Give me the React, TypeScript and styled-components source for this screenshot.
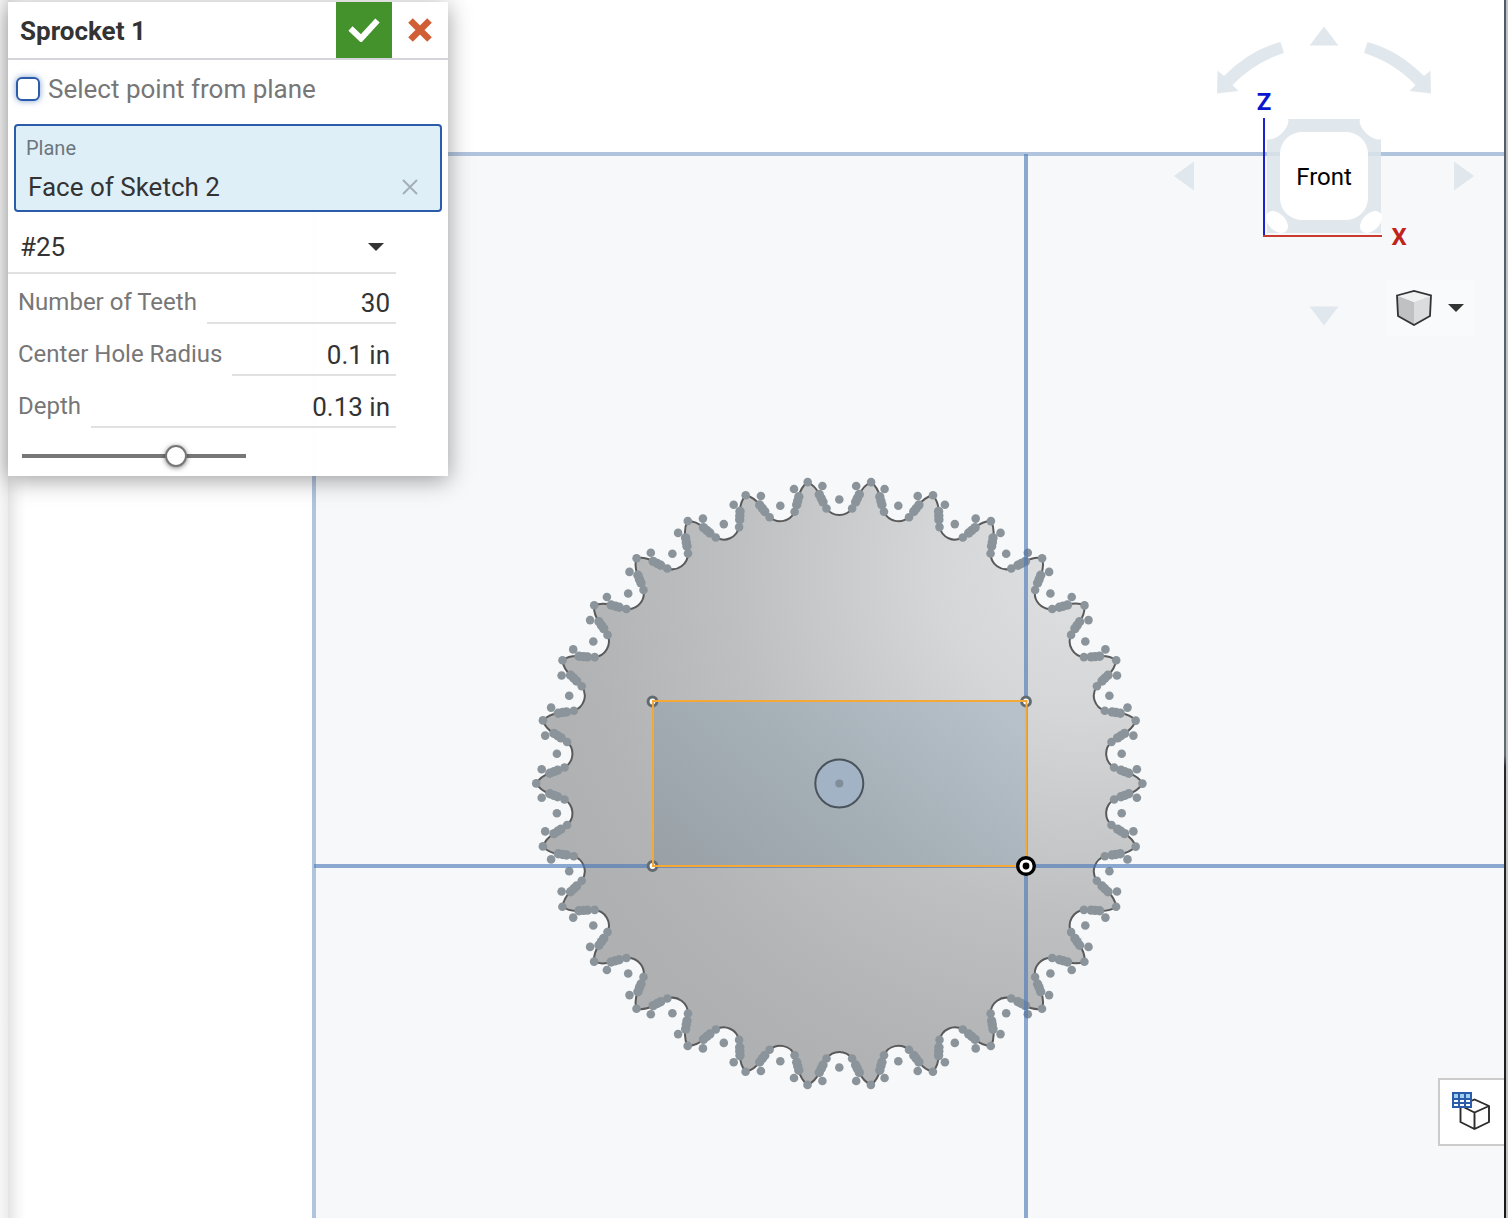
import React, { useState } from "react";
import styled, { createGlobalStyle } from "styled-components";

const GlobalStyle = createGlobalStyle`
  *, *::before, *::after { box-sizing: border-box; }
  body { margin: 0; background: #fff; font-family: Roboto, "Liberation Sans", sans-serif; color: #333; }
  button, input, select { font: inherit; color: inherit; margin: 0; padding: 0; border: 0; background: none; border-radius: 0; }
`;

const Workspace = styled.main`
  position: relative;
  display: flex;
  min-height: 100vh;
  overflow: hidden;
  background: #fff;
`;

const LeftGutter = styled.div`
  flex: 0 0 8px;
  background: linear-gradient(90deg, #f6f6f6, #ececec);
`;

const Stage = styled.div`
  flex: 1;
  background: linear-gradient(90deg, #e4e4e4, #f7f7f7 10px, #fff 18px);
`;

const RightGutter = styled.div`
  flex: 0 0 4px;
  background:
    linear-gradient(#4f5b69, #5f6a70 62%, #26282b 63%, #191919) left / 2px 100% no-repeat,
    #c4c4c4;
`;

const Scene = styled.svg`
  position: absolute;
  inset: 0;
  width: calc(100% - 4px);
  height: 100%;
`;

const Dialog = styled.form`
  position: absolute;
  top: 2px;
  left: 8px;
  width: 440px;
  padding-bottom: 8px;
  background: rgba(255, 255, 255, 0.98);
  box-shadow: 0 4px 22px rgba(0, 0, 0, 0.38);
`;

const DialogHeader = styled.header`
  display: flex;
  height: 58px;
  border-bottom: 2px solid #d3d5da;
`;

const DialogTitle = styled.h1`
  flex: 1;
  margin: 0;
  padding-left: 12px;
  font-size: 26px;
  font-weight: 700;
  line-height: 58px;
`;

const HeaderButton = styled.button<{ $accept?: boolean }>`
  display: grid;
  place-items: center;
  width: 56px;
  height: 56px;
  color: ${(p) => (p.$accept ? "#fff" : "#d15f36")};
  background: ${(p) => (p.$accept ? "#43922b" : "transparent")};
`;

const CheckRow = styled.label`
  display: flex;
  align-items: center;
  gap: 8px;
  height: 58px;
  padding-left: 8px;
  font-size: 26px;
  color: #777;
`;

const Tick = styled.input`
  appearance: none;
  width: 24px;
  height: 24px;
  border: 2px solid #2a5caa;
  border-radius: 6px;
  background: #fff;
  box-shadow: 0 0 6px rgba(42, 92, 170, 0.6);
  &:checked { background: #2a5caa; }
`;

const Selection = styled.section`
  display: flex;
  flex-direction: column;
  gap: 8px;
  height: 88px;
  margin: 6px 6px 0;
  padding: 10px 20px 0 10px;
  border: 2px solid #2a5caa;
  border-radius: 4px;
  background: #dfeff8;
`;

const SelectionLabel = styled.h2`
  margin: 0;
  font-size: 20px;
  font-weight: 400;
  line-height: 24px;
  color: #6c767c;
`;

const SelectionItem = styled.div`
  display: flex;
  justify-content: space-between;
  align-items: center;
  padding-left: 2px;
  font-size: 26px;
  line-height: 38px;
`;

const ClearButton = styled.button`
  display: grid;
  place-items: center;
  width: 20px;
  height: 20px;
  color: #a3b0b7;
`;

const Fields = styled.div`
  width: 388px;
`;

const SelectWrap = styled.div`
  display: grid;
  align-items: center;
  height: 62px;
  padding-top: 10px;
  border-bottom: 2px solid #e1e1e1;
  > * { grid-area: 1 / 1; }
  > svg { justify-self: end; margin-right: 12px; pointer-events: none; }
`;

const ChainSelect = styled.select`
  appearance: none;
  width: 100%;
  height: 48px;
  padding-left: 12px;
  font-size: 26px;
`;

const FieldRow = styled.div`
  display: flex;
  align-items: flex-start;
  gap: 10px;
  height: 52px;
  padding-left: 10px;
`;

const FieldLabel = styled.label`
  font-size: 24px;
  line-height: 56px;
  color: #777;
  white-space: nowrap;
`;

const FieldInput = styled.input`
  flex: 1;
  min-width: 0;
  height: 50px;
  padding: 10px 6px 0 0;
  border-bottom: 2px solid #e1e1e1;
  text-align: right;
  font-size: 26px;
  outline: none;
`;

const DepthSlider = styled.input`
  display: block;
  appearance: none;
  width: 224px;
  height: 24px;
  margin: 14px 14px 0;
  background: linear-gradient(#777, #777) center / 100% 4px no-repeat;
  &::-webkit-slider-thumb {
    appearance: none;
    width: 22px;
    height: 22px;
    border: 2px solid #777;
    border-radius: 50%;
    background: #fff;
    box-shadow: 0 1px 5px rgba(0, 0, 0, 0.5);
  }
`;

const ViewControls = styled.nav`
  position: absolute;
  top: 20px;
  right: 28px;
  width: 310px;
`;

const RenderButton = styled.button`
  display: flex;
  align-items: center;
  justify-content: space-between;
  width: 88px;
  height: 56px;
  padding: 0 10px;
  margin: -60px 6px 0 auto;
  border-radius: 4px;
  background: #f9fafb;
`;

const CubeArt = styled.svg`
  display: block;
  font-size: 24px;
`;

const TablesButton = styled.button`
  position: absolute;
  right: 4px;
  bottom: 72px;
  display: grid;
  place-items: center;
  width: 66px;
  height: 68px;
  border: 2px solid #ccc;
  border-right: 0;
  background: #fff;
`;

const CX = 839.3;
const CY = 783.5;
const TEETH = 30;

type Point = [number, number];

/* Points of one tooth gap, relative to the hub, with the gap straight up. */
const VERTICES: Point[] = [
  [0, -284],
  [-31.6, -301.4],
  [-12.8, -275], [12.8, -275],
  [-16.3, -281.5], [16.3, -281.5],
  [-18, -285], [18, -285],
  [-20, -289], [20, -289],
  [-16.9, -297.5], [16.9, -297.5],
];

const rotate = ([x, y]: Point, step: number): string => {
  const a = (step * 2 * Math.PI) / TEETH;
  const px = CX + x * Math.cos(a) - y * Math.sin(a);
  const py = CY + x * Math.sin(a) + y * Math.cos(a);
  return `${px.toFixed(1)} ${py.toFixed(1)}`;
};

const steps = Array.from({ length: TEETH }, (_, i) => i);

const outline =
  `M${rotate([-31.6, -301.4], 0)}` +
  steps
    .map((s) =>
      [
        `Q${rotate([-24.2, -298], s)} ${rotate([-19.7, -288.7], s)}`,
        `L${rotate([-16.3, -281.5], s)}`,
        `L${rotate([-12.7, -275], s)}`,
        `A15.6 15.6 0 0 0 ${rotate([12.7, -275], s)}`,
        `L${rotate([16.3, -281.5], s)}`,
        `L${rotate([19.7, -288.7], s)}`,
        `Q${rotate([24.2, -298], s)} ${rotate([31.6, -301.4], s)}`,
      ].join("")
    )
    .join("") +
  "Z";

function Sprocket() {
  return (
    <>
      <path d={outline} fill="url(#steel)" stroke="#5a5a5a" strokeWidth="2" />
      {steps.map((s) =>
        VERTICES.map((v, i) => {
          const [x, y] = rotate(v, s).split(" ");
          const onBlend = i >= 4 && i <= 9;
          return <circle key={`${s}-${i}`} cx={x} cy={y} r={onBlend ? 4.7 : 4.3} fill="#8b949a" />;
        })
      )}
    </>
  );
}

function ModelScene() {
  return (
    <Scene viewBox="0 0 1504 1218" preserveAspectRatio="xMidYMid slice" role="img" aria-label="Sprocket model, front view">
      <defs>
        <radialGradient id="steel" gradientUnits="userSpaceOnUse" cx="1080" cy="570" r="580">
          <stop offset="0" stopColor="#dfe0e1" />
          <stop offset="0.25" stopColor="#d5d6d7" />
          <stop offset="0.6" stopColor="#bebfc0" />
          <stop offset="0.85" stopColor="#b3b4b5" />
          <stop offset="1" stopColor="#afb0b1" />
        </radialGradient>
        <linearGradient id="sketch" gradientUnits="userSpaceOnUse" x1="680" y1="880" x2="900" y2="620">
          <stop offset="0" stopColor="#99a1a7" />
          <stop offset="0.5" stopColor="#a5afb6" />
          <stop offset="1" stopColor="#b6c1c9" />
        </linearGradient>
      </defs>
      <rect x="314" y="154" width="1400" height="1200" fill="#f6f8fa" stroke="#b1c4de" strokeWidth="4" />
      <Sprocket />
      <path d="M1026 154V1400M314 866H1600" stroke="#4878b8" strokeOpacity="0.62" strokeWidth="4" fill="none" />
      <rect x="653" y="702" width="373" height="164" fill="url(#sketch)" />
      <circle cx="839.300" cy="783.500" r="24" fill="#a1b3c4" stroke="#4a535b" strokeWidth="2" />
      <circle cx="839.300" cy="783.500" r="4" fill="#808d9a" />
      {[[652.5, 701.5], [1026, 701.5], [652.5, 866]].map(([x, y]) => (
        <circle key={`${x}-${y}`} cx={x} cy={y} r="4.4" fill="#fff" stroke="#626b71" strokeWidth="3" />
      ))}
      <rect x="653" y="701" width="373.500" height="165" fill="none" stroke="#f4a836" strokeWidth="2" />
      <circle cx="1026" cy="866" r="8.3" fill="#fff" stroke="#000" strokeWidth="3.4" />
      <circle cx="1026" cy="866" r="3.4" fill="#000" />
    </Scene>
  );
}

function ViewCube() {
  return (
    <CubeArt width="310" height="320" viewBox="1170 20 310 320" role="img" aria-label="View cube">
      <g fill="#dce4ea" fillOpacity="0.85">
        <path d="M1324 26.500l14.500 19h-29z" />
        <path d="M1324 325.500l14.500-19h-29z" />
        <path d="M1174 176l20-14.500v29z" />
        <path d="M1474 176l-20-14.500v29z" />
        <path d="M1280.500 42l3.500 11Q1255 62 1232.500 85l6 6-21.500 2.500.5-23 6.500 5.500Q1250 50 1280.500 42z" />
        <path d="M1367.500 42l-3.500 11Q1393 62 1415.500 85l-6 6 21.500 2.500-.5-23-6.500 5.500Q1398 50 1367.500 42z" />
        <path d="M1267 119h114v114h-114z" />
      </g>
      <g fill="#fff">
        <path d="M1266 118h22q2 7-6 15t-16 6z" />
        <path d="M1382 118h-22q-2 7 6 15t16 6z" />
        <ellipse cx="1277" cy="222" rx="8.500" ry="13" transform="rotate(-45 1277 222)" />
        <ellipse cx="1371" cy="222" rx="8.500" ry="13" transform="rotate(45 1371 222)" />
        <rect x="1280" y="132" width="88" height="88" rx="22" />
      </g>
      <path d="M1264 118v118" stroke="#1a22cf" strokeWidth="2" />
      <path d="M1263 236h119" stroke="#c8392f" strokeWidth="2" />
      <text x="1324" y="185" textAnchor="middle" fill="#000">Front</text>
      <text x="1264" y="110" textAnchor="middle" fill="#0a16cd" fontWeight="700">Z</text>
      <text x="1399" y="245" textAnchor="middle" fill="#c0241b" fontWeight="700">X</text>
    </CubeArt>
  );
}

function Caret() {
  return (
    <svg width="16" height="8" viewBox="0 0 16 8" aria-hidden="true">
      <path d="M0 0h16l-8 8z" fill="#333" />
    </svg>
  );
}

export default function App() {
  const [pickPoint, setPickPoint] = useState(false);
  const [chain, setChain] = useState("#25");
  const [teeth, setTeeth] = useState("30");
  const [radius, setRadius] = useState("0.1 in");
  const [depth, setDepth] = useState("0.13 in");
  const [slide, setSlide] = useState("71");

  return (
    <>
      <GlobalStyle />
      <Workspace>
        <LeftGutter />
        <Stage />
        <RightGutter />
        <ModelScene />

        <ViewControls aria-label="View">
          <ViewCube />
          <RenderButton type="button" aria-label="Display style">
            <svg width="36" height="36" viewBox="0 0 36 36" aria-hidden="true">
              <path d="M1 5.500L18 12v23L2 26z" fill="#c0c1c2" />
              <path d="M35 5.500L18 12v23l16-9z" fill="#dbdcdd" />
              <path d="M1 5.500L18 1l17 4.500L18 12z" fill="#f0f1f1" />
              <path d="M1 5.500L18 1l17 4.500-1 20.500-16 9L2 26z" fill="none" stroke="#333" strokeWidth="1.800" />
            </svg>
            <Caret />
          </RenderButton>
        </ViewControls>

        <TablesButton type="button" aria-label="Tables">
          <svg width="40" height="42" viewBox="0 0 40 42" aria-hidden="true">
            <path d="M8.500 14.500L22.500 8.500 37 15v16l-14.500 7-14-7zM8.500 14.500l14 7 14.500-6.500M22.500 21.500V38" fill="#fff" stroke="#2c2c2c" strokeWidth="1.900" />
            <rect x="0" y="1" width="20" height="16" fill="#2a5caa" />
            <path d="M2 3h4v4h-4zM8 3h4v4h-4zM14 3h4v4h-4z" fill="#9fd0f2" />
            <path d="M2 9h4v2h-4zM8 9h4v2h-4zM14 9h4v2h-4zM2 13h4v2h-4zM8 13h4v2h-4zM14 13h4v2h-4z" fill="#fff" />
          </svg>
        </TablesButton>

        <Dialog onSubmit={(e) => e.preventDefault()}>
          <DialogHeader>
            <DialogTitle>Sprocket 1</DialogTitle>
            <HeaderButton $accept type="submit" aria-label="Accept">
              <svg width="32" height="24" viewBox="0 0 32 24" aria-hidden="true">
                <path d="M2.500 10.500L13 20.500 29.500 2.500" fill="none" stroke="currentColor" strokeWidth="6" />
              </svg>
            </HeaderButton>
            <HeaderButton type="button" aria-label="Cancel">
              <svg width="24" height="24" viewBox="0 0 24 24" aria-hidden="true">
                <path d="M2.500 2.500l19 19M21.500 2.500l-19 19" stroke="currentColor" strokeWidth="6.500" />
              </svg>
            </HeaderButton>
          </DialogHeader>
          <CheckRow>
            <Tick type="checkbox" checked={pickPoint} onChange={(e) => setPickPoint(e.target.checked)} />
            Select point from plane
          </CheckRow>
          <Selection>
            <SelectionLabel>Plane</SelectionLabel>
            <SelectionItem>
              Face of Sketch 2
              <ClearButton type="button" aria-label="Remove Face of Sketch 2">
                <svg width="16" height="16" viewBox="0 0 16 16" aria-hidden="true">
                  <path d="M1 1l14 14M15 1L1 15" stroke="currentColor" strokeWidth="2" />
                </svg>
              </ClearButton>
            </SelectionItem>
          </Selection>
          <Fields>
            <SelectWrap>
              <ChainSelect aria-label="Chain size" value={chain} onChange={(e) => setChain(e.target.value)}>
                <option>#25</option>
              </ChainSelect>
              <Caret />
            </SelectWrap>
            <FieldRow>
              <FieldLabel htmlFor="teeth">Number of Teeth</FieldLabel>
              <FieldInput id="teeth" value={teeth} onChange={(e) => setTeeth(e.target.value)} />
            </FieldRow>
            <FieldRow>
              <FieldLabel htmlFor="radius">Center Hole Radius</FieldLabel>
              <FieldInput id="radius" value={radius} onChange={(e) => setRadius(e.target.value)} />
            </FieldRow>
            <FieldRow>
              <FieldLabel htmlFor="depth">Depth</FieldLabel>
              <FieldInput id="depth" value={depth} onChange={(e) => setDepth(e.target.value)} />
            </FieldRow>
          </Fields>
          <DepthSlider type="range" aria-label="Depth" min="0" max="100" value={slide} onChange={(e) => setSlide(e.target.value)} />
        </Dialog>
      </Workspace>
    </>
  );
}
